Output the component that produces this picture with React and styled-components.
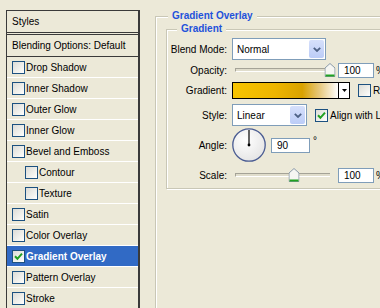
import React from 'react';
import styled, { createGlobalStyle } from 'styled-components';

const Global = createGlobalStyle`
  html, body { margin: 0; padding: 0; background: #ECE9D8; }
  body {
    font-family: "Liberation Sans", Arial, sans-serif;
    font-size: 10px;
    color: #000;
  }
  * { white-space: nowrap; }
`;

const Screen = styled.div`
  width: 380px;
  height: 308px;
  overflow: hidden;
  box-sizing: border-box;
  padding: 10px 0 0 6px;
  display: flex;
  align-items: flex-start;
  gap: 15px;
`;

/* ---------- left styles list ---------- */
const StylesList = styled.div`
  flex: 0 0 134px;
  box-sizing: border-box;
  height: 320px;
  border: 1px solid #3a3a3a;
  border-right-width: 2px;
  border-bottom: none;
`;

const ListHeader = styled.div`
  height: 21px;
  display: flex;
  align-items: center;
  padding-left: 5px;
  border-bottom: 3px double #3a3a3a;
`;

const BlendingRow = styled.div`
  height: 21px;
  display: flex;
  align-items: center;
  padding-left: 5px;
  border-bottom: 1px solid #3a3a3a;
`;

const StyleRow = styled.div`
  height: 20px;
  display: flex;
  align-items: center;
  gap: 1px;
  padding-left: ${p => (p.$indent ? 18 : 5)}px;
  border-bottom: 1px solid #fff;
  background: ${p => (p.$active ? '#316AC5' : 'transparent')};
  color: ${p => (p.$active ? '#fff' : '#000')};
  font-weight: ${p => (p.$active ? 'bold' : 'normal')};
`;

const Box = styled.span`
  flex: none;
  width: 13px;
  height: 13px;
  box-sizing: border-box;
  border: 1px solid #1C5180;
  background: linear-gradient(135deg, #DCDCD7 0%, #F4F4F0 70%, #FFFFFF 100%);
  display: flex;
  align-items: center;
  justify-content: center;
`;

const Check = () => (
  <svg width="9" height="9" viewBox="0 0 9 9">
    <polyline points="1,4.2 3.4,6.8 8,1.6" fill="none" stroke="#21A121" strokeWidth="2" />
  </svg>
);

const CheckBox = ({ checked }) => <Box>{checked ? <Check /> : null}</Box>;

/* ---------- right panel ---------- */
const Group = styled.fieldset`
  flex: none;
  margin: 0;
  min-width: 0;
  box-sizing: border-box;
  width: ${p => p.$w}px;
  height: ${p => (p.$h ? `${p.$h}px` : 'auto')};
  border: 1px solid #C9C7B6;
  box-shadow: inset 1px 1px 0 #fff, 1px 1px 0 #fff;
  padding: ${p => p.$pad};
`;

const Legend = styled.legend`
  margin-left: ${p => p.$offset}px;
  padding: 0 4px;
  line-height: 12px;
  font-weight: bold;
  color: #1F52DB;
  background: #ECE9D8;
`;

const Row = styled.div`
  display: flex;
  align-items: center;
  height: ${p => p.$h}px;
  margin-top: ${p => p.$mt || 0}px;
`;

const Label = styled.span`
  flex: none;
  width: 60px;
  margin-right: 5px;
  text-align: right;
`;

const Select = styled.div`
  flex: none;
  width: ${p => p.$w}px;
  height: 22px;
  box-sizing: border-box;
  border: 1px solid #7F9DB9;
  background: #fff;
  padding: 1px;
  display: flex;
  align-items: stretch;
`;

const SelectText = styled.span`
  flex: 1;
  display: flex;
  align-items: center;
  padding-left: 3px;
`;

const DropBtn = styled.span`
  flex: none;
  width: 15px;
  border-radius: 2px;
  background: linear-gradient(#D6E0FB, #BBCCF7);
  display: flex;
  align-items: center;
  justify-content: center;
`;

const Chevron = () => (
  <svg width="8" height="5" viewBox="0 0 8 5">
    <polyline points="0.8,0.8 4,4 7.2,0.8" fill="none" stroke="#4D6185" strokeWidth="1.8" />
  </svg>
);

const NumBox = styled.div`
  flex: none;
  width: ${p => p.$w}px;
  height: 15px;
  box-sizing: border-box;
  border: 1px solid #7F9DB9;
  background: #fff;
  padding-left: 5px;
  display: flex;
  align-items: center;
`;

const Unit = styled.span`
  margin-left: ${p => p.$ml || 2}px;
  align-self: ${p => (p.$top ? 'flex-start' : 'center')};
  margin-top: ${p => (p.$top ? 8 : 0)}px;
`;

const Slider = styled.div`
  flex: none;
  position: relative;
  width: 95px;
  height: 16px;
  margin-left: 3px;
  margin-right: 8px;
  display: flex;
  align-items: center;
`;

const Track = styled.div`
  flex: 1;
  height: 4px;
  box-sizing: border-box;
  border-top: 1px solid #A5A397;
  border-left: 1px solid #A5A397;
  border-bottom: 1px solid #fff;
  background: #E0DDCC;
`;

const ThumbWrap = styled.span`
  position: absolute;
  top: 1px;
  transform: translateX(-50%);
  display: flex;
`;

const Thumb = ({ pct }) => (
  <ThumbWrap style={{ left: `${pct}%` }}>
    <svg width="11" height="14" viewBox="0 0 11 14">
      <polygon points="0.5,5 5.5,0.5 10.5,5 10.5,13.5 0.5,13.5" fill="#F6F6F2" stroke="#8A9AA8" />
      <line x1="1" y1="12.5" x2="10" y2="12.5" stroke="#21A121" strokeWidth="2" />
    </svg>
  </ThumbWrap>
);

const Swatch = styled.div`
  flex: none;
  width: 118px;
  height: 17px;
  box-sizing: border-box;
  border: 1px solid #000;
  display: flex;
`;

const Ramp = styled.div`
  flex: 1;
  background: linear-gradient(90deg, #F7C400 0%, #EDB500 40%, #D9A200 66%, #E6C77A 82%, #FFFFFF 100%);
`;

const RampArrow = styled.div`
  flex: none;
  width: 10px;
  border-left: 1px solid #000;
  background: #fff;
  display: flex;
  align-items: center;
  justify-content: center;
`;

const Option = styled.div`
  flex: none;
  display: flex;
  align-items: center;
  gap: 2px;
  margin-left: 8px;
`;

const DialWrap = styled.div`
  flex: none;
  width: 34px;
  height: 34px;
  display: flex;
  margin-right: 5px;
`;

const Dial = () => (
  <DialWrap>
    <svg width="34" height="34" viewBox="0 0 34 34">
      <defs>
        <radialGradient id="dialg" cx="40%" cy="35%" r="70%">
          <stop offset="0%" stopColor="#FFFFFF" />
          <stop offset="100%" stopColor="#E4E4E4" />
        </radialGradient>
      </defs>
      <circle cx="17" cy="17" r="16.2" fill="url(#dialg)" stroke="#4A5C92" strokeWidth="1.3" />
      <line x1="17" y1="17" x2="17" y2="2" stroke="#000" strokeWidth="1.2" />
      <circle cx="17" cy="17" r="1.4" fill="#000" />
    </svg>
  </DialWrap>
);

const listItems = [
  { name: 'Drop Shadow' },
  { name: 'Inner Shadow' },
  { name: 'Outer Glow' },
  { name: 'Inner Glow' },
  { name: 'Bevel and Emboss' },
  { name: 'Contour', indent: true },
  { name: 'Texture', indent: true },
  { name: 'Satin' },
  { name: 'Color Overlay' },
  { name: 'Gradient Overlay', active: true, checked: true },
  { name: 'Pattern Overlay' },
  { name: 'Stroke' },
];

export default function App() {
  return (
    <>
      <Global />
      <Screen>
        <StylesList>
          <ListHeader>Styles</ListHeader>
          <BlendingRow>Blending Options: Default</BlendingRow>
          {listItems.map(it => (
            <StyleRow key={it.name} $indent={it.indent} $active={it.active}>
              <CheckBox checked={it.checked} />
              <span>{it.name}</span>
            </StyleRow>
          ))}
        </StylesList>

        <Group $w={260} $h={310} $pad="1px 0 0 10px">
          <Legend $offset={2}>Gradient Overlay</Legend>
          <Group $w={240} $pad="3px 0 4px 0">
            <Legend $offset={10}>Gradient</Legend>

            <Row $h={22}>
              <Label>Blend Mode:</Label>
              <Select $w={94}>
                <SelectText>Normal</SelectText>
                <DropBtn><Chevron /></DropBtn>
              </Select>
            </Row>

            <Row $h={16} $mt={2}>
              <Label>Opacity:</Label>
              <Slider>
                <Track />
                <Thumb pct={100} />
              </Slider>
              <NumBox $w={36}>100</NumBox>
              <Unit>%</Unit>
            </Row>

            <Row $h={17} $mt={4}>
              <Label>Gradient:</Label>
              <Swatch>
                <Ramp />
                <RampArrow>
                  <svg width="5" height="3" viewBox="0 0 5 3">
                    <polygon points="0,0 5,0 2.5,3" fill="#000" />
                  </svg>
                </RampArrow>
              </Swatch>
              <Option>
                <CheckBox />
                <span>Reverse</span>
              </Option>
            </Row>

            <Row $h={22} $mt={5}>
              <Label>Style:</Label>
              <Select $w={75}>
                <SelectText>Linear</SelectText>
                <DropBtn><Chevron /></DropBtn>
              </Select>
              <Option>
                <CheckBox checked />
                <span>Align with Layer</span>
              </Option>
            </Row>

            <Row $h={36} $mt={1}>
              <Label>Angle:</Label>
              <Dial />
              <NumBox $w={39}>90</NumBox>
              <Unit $ml={3} $top>°</Unit>
            </Row>

            <Row $h={18} $mt={3}>
              <Label>Scale:</Label>
              <Slider>
                <Track />
                <Thumb pct={62} />
              </Slider>
              <NumBox $w={36}>100</NumBox>
              <Unit>%</Unit>
            </Row>
          </Group>
        </Group>
      </Screen>
    </>
  );
}
